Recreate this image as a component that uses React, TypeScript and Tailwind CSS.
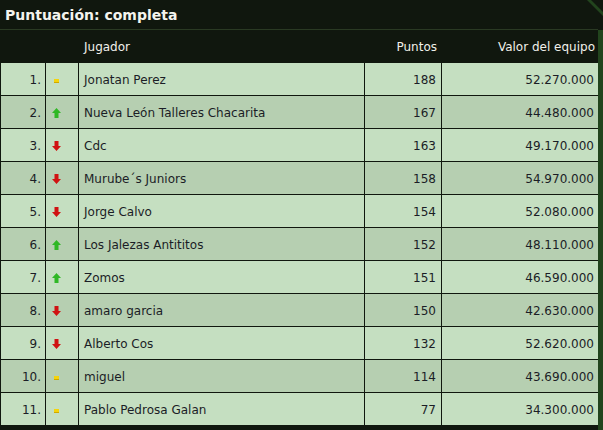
import React from "react";

type Trend = "same" | "up" | "down";
const rows: { pos: number; trend: Trend; name: string; pts: number; value: string }[] = [
  { pos: 1, trend: "same", name: "Jonatan Perez", pts: 188, value: "52.270.000" },
  { pos: 2, trend: "up", name: "Nueva León Talleres Chacarita", pts: 167, value: "44.480.000" },
  { pos: 3, trend: "down", name: "Cdc", pts: 163, value: "49.170.000" },
  { pos: 4, trend: "down", name: "Murube´s Juniors", pts: 158, value: "54.970.000" },
  { pos: 5, trend: "down", name: "Jorge Calvo", pts: 154, value: "52.080.000" },
  { pos: 6, trend: "up", name: "Los Jalezas Antititos", pts: 152, value: "48.110.000" },
  { pos: 7, trend: "up", name: "Zomos", pts: 151, value: "46.590.000" },
  { pos: 8, trend: "down", name: "amaro garcia", pts: 150, value: "42.630.000" },
  { pos: 9, trend: "down", name: "Alberto Cos", pts: 132, value: "52.620.000" },
  { pos: 10, trend: "same", name: "miguel", pts: 114, value: "43.690.000" },
  { pos: 11, trend: "same", name: "Pablo Pedrosa Galan", pts: 77, value: "34.300.000" },
];

function TrendIcon({ t }: { t: Trend }) {
  if (t === "same")
    return (
      <svg width="9" height="9" viewBox="0 0 9 9" shapeRendering="crispEdges">
        <rect x="2" y="3" width="5" height="4" fill="#f5d40c" />
        <rect x="2" y="6" width="5" height="1" fill="#cfa800" />
      </svg>
    );
  if (t === "up")
    return (
      <svg width="9" height="10" viewBox="0 0 9 10">
        <polygon points="4.5,0 9,5 6.5,5 6.5,10 2.5,10 2.5,5 0,5" fill="#2fb825" />
      </svg>
    );
  return (
    <svg width="9" height="10" viewBox="0 0 9 10">
      <polygon points="2.5,0 6.5,0 6.5,5 9,5 4.5,10 0,5 2.5,5" fill="#d01212" />
    </svg>
  );
}

export default function App() {
  return (
    <div
      className="relative w-[603px] h-[430px] bg-[#10170e] flex flex-col overflow-hidden text-[12px] text-[#1b1d26]"
      style={{ fontFamily: '"DejaVu Sans", Verdana, sans-serif' }}
    >
      <svg className="absolute right-0 top-0" width="16" height="16" viewBox="0 0 16 16">
        <polygon points="0,0 4,0 16,12 16,16" fill="#22441d" />
      </svg>
      <div className="h-[29px] flex items-center pl-[5px] pt-[2px] text-[14px] font-bold text-[#f4f4ee]">
        Puntuación: completa
      </div>
      <div className="h-px w-[598px] bg-[#2a3a23]" />
      <div className="flex flex-1">
        <div className="w-[598px] pl-px">
          <div className="grid grid-cols-[44px_32px_285px_76px_156px] gap-x-px gap-y-px auto-rows-[32px]">
            <div className="h-[33px]" />
            <div />
            <div className="flex items-center pl-[5px] pt-[2px] text-[#f0f0ea]">Jugador</div>
            <div className="flex items-center justify-end pr-[4px] pt-[2px] text-[#f0f0ea]">Puntos</div>
            <div className="flex items-center justify-end pr-[3px] pt-[2px] text-[#f0f0ea]">Valor del equipo</div>
            {rows.map((r, i) => {
              const bg = i % 2 === 0 ? "bg-[#c5dfc1]" : "bg-[#b6cfb1]";
              return (
                <React.Fragment key={r.pos}>
                  <div className={`${bg} flex items-center justify-end pr-[4px] pt-[2px]`}>{r.pos}.</div>
                  <div className={`${bg} flex items-center pl-[6px] pt-[2px]`}>
                    <TrendIcon t={r.trend} />
                  </div>
                  <div className={`${bg} flex items-center pl-[5px] pt-[2px]`}>{r.name}</div>
                  <div className={`${bg} flex items-center justify-end pr-[5px] pt-[2px]`}>{r.pts}</div>
                  <div className={`${bg} flex items-center justify-end pr-[4px] pt-[2px]`}>{r.value}</div>
                </React.Fragment>
              );
            })}
          </div>
        </div>
        <div className="w-[5px] bg-[#22441d]" />
      </div>
    </div>
  );
}
